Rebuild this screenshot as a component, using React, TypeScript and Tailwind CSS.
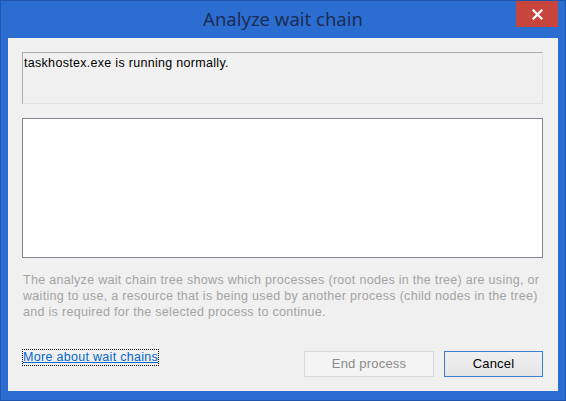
import React from 'react';

const body = { fontFamily: '"Liberation Sans", Arial, sans-serif' };
const title = { fontFamily: '"Noto Sans", "Open Sans", sans-serif' };

const CloseButton: React.FC = () => (
  <button className="absolute right-[7px] top-0 w-[42px] h-[26px] bg-[#c8453e] flex items-center justify-center">
    <svg width="11" height="11" viewBox="0 0 11 11">
      <path d="M1.5 1.5 L9.5 9.5 M9.5 1.5 L1.5 9.5" stroke="#ffffff" strokeWidth="2.2" strokeLinecap="square" />
    </svg>
  </button>
);

const App: React.FC = () => {
  return (
    <div className="w-[566px] h-[401px] bg-[#2c6dd2] border border-[#1f56ad] flex flex-col" style={body}>
      {/* title bar */}
      <div className="relative h-[37px] flex items-center justify-center">
        <h1 className="text-[18.5px] leading-none text-[#1b2d52] -mt-[1px]" style={title}>
          Analyze wait chain
        </h1>
        <CloseButton />
      </div>

      {/* client area */}
      <div className="flex-1 mx-[7px] mb-[9px] bg-[#f0f0f0] flex flex-col pl-[14px] pr-[15px] pt-[14px] pb-[14px]">
        <div className="h-[52px] border border-[#adadad] border-b-[#e3e3e3] border-r-[#e3e3e3] bg-[#f0f0f0] px-[1px] pt-[2px]">
          <p className="text-[12.5px] leading-[16px] tracking-[0.3px] text-black">taskhostex.exe is running normally.</p>
        </div>

        <div className="mt-[14px] h-[140px] bg-white border border-[#828790]" />

        <p className="mt-[14px] text-[12.5px] leading-[16px] tracking-[0.3px] whitespace-nowrap text-[#a3a3a3] pl-[1px]">
          The analyze wait chain tree shows which processes (root nodes in the tree) are using, or
          <br />
          waiting to use, a resource that is being used by another process (child nodes in the tree)
          <br />
          and is required for the selected process to continue.
        </p>

        <div className="mt-auto flex items-start justify-between">
          <a
            href="#"
            className="mt-[-1px] ml-[1px] text-[12.5px] leading-[15px] tracking-[0.3px] text-[#0066cc] underline outline outline-1 outline-dotted outline-black"
          >
            More about wait chains
          </a>
          <div className="flex gap-[10px]">
            <button className="w-[130px] h-[26px] border border-[#d9d9d9] bg-[#f4f4f4] text-[13px] tracking-[0.2px] text-[#8a8a8a]">
              End process
            </button>
            <button className="w-[99px] h-[26px] border border-[#3c7fd1] bg-gradient-to-b from-[#f0f0f0] to-[#e5e5e5] text-[13px] tracking-[0.2px] text-black">
              Cancel
            </button>
          </div>
        </div>
      </div>
    </div>
  );
};

export default App;
